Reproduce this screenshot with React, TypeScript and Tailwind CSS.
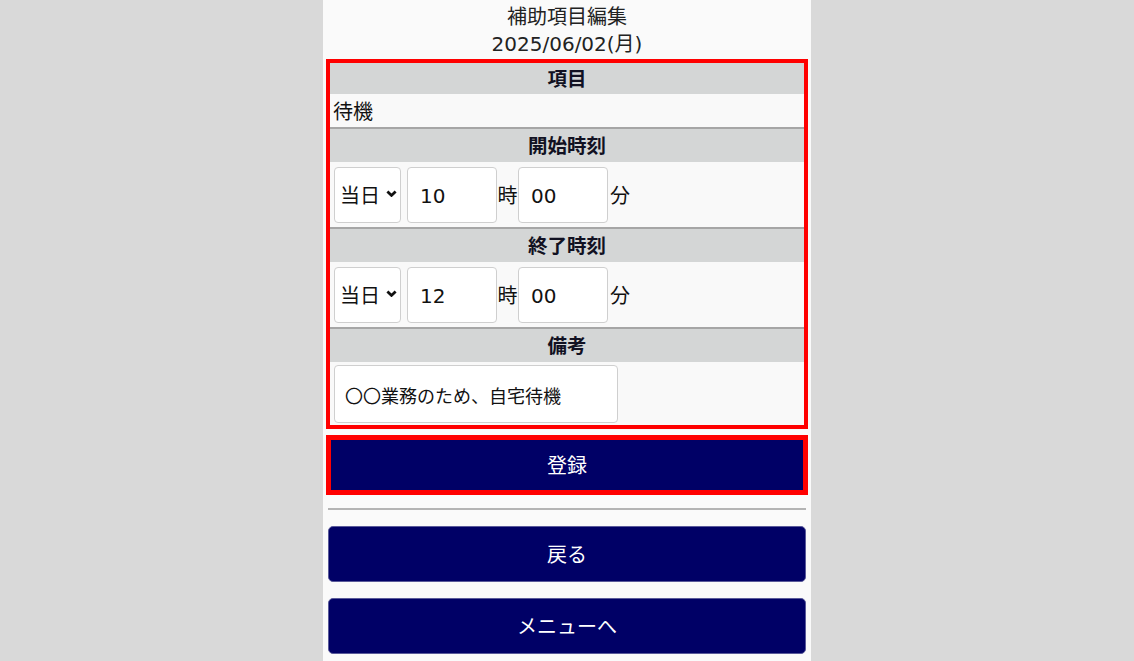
const font = "font-['DejaVu_Sans','Noto_Sans_CJK_JP',sans-serif]";

function SectionHeader({ label, first = false }: { label: string; first?: boolean }) {
  return (
    <div
      className={
        first
          ? "flex h-[31px] items-center justify-center bg-[#d4d6d6] pt-[3px] text-[19.5px] font-bold leading-none text-[#111122]"
          : "flex h-[35px] items-center justify-center border-t-2 border-[#a6a6a6] bg-[#d4d6d6] pt-[3px] text-[19.5px] font-bold leading-none text-[#111122]"
      }
    >
      {label}
    </div>
  );
}

function DaySelect() {
  return (
    <div className="relative h-[56px] w-[67px] shrink-0">
      <select
        defaultValue="当日"
        className="h-full w-full appearance-none rounded-[4px] border border-[#cfcfcf] bg-white pl-[5px] pt-[3px] text-[20px] text-[#111] outline-none"
      >
        <option>当日</option>
        <option>翌日</option>
      </select>
      <svg
        viewBox="0 0 11 7"
        className="pointer-events-none absolute right-[4px] top-[23px] h-[7px] w-[11px]"
      >
        <polyline points="1.4,1.4 5.5,5.4 9.6,1.4" fill="none" stroke="#111" strokeWidth="2.8" />
      </svg>
    </div>
  );
}

function TimeRow({ hour, minute }: { hour: string; minute: string }) {
  return (
    <div className="flex h-[65px] items-center bg-[#f9f9f9] pl-[4px] text-[20px] text-[#111]">
      <DaySelect />
      <input
        defaultValue={hour}
        className="ml-[6px] h-[56px] w-[90px] rounded-[4px] border border-[#cfcfcf] bg-white pl-[12px] pt-[3px] text-[20px] text-[#111] outline-none"
      />
      <span className="w-[21px] pt-[3px] text-center">時</span>
      <input
        defaultValue={minute}
        className="h-[56px] w-[90px] rounded-[4px] border border-[#cfcfcf] bg-white pl-[12px] pt-[3px] text-[20px] text-[#111] outline-none"
      />
      <span className="ml-[2px] pt-[3px]">分</span>
    </div>
  );
}

export default function App() {
  return (
    <div className={`flex min-h-[661px] justify-center bg-[#d9d9d9] ${font}`}>
      <div className="flex w-[488px] flex-col bg-[#fafafa] px-[3px]">
        <div className="pt-[2px] text-center text-[20px] leading-[28px] text-[#222]">
          <div className="pt-[1px]">補助項目編集</div>
          <div className="-mt-[1px]">2025/06/02(月)</div>
        </div>

        <div className="mt-[1px] border-4 border-[#ff0000]">
          <SectionHeader label="項目" first />
          <div className="flex h-[33px] items-center bg-[#f9f9f9] pl-[3px] pt-[3px] text-[20px] text-[#111]">待機</div>

          <SectionHeader label="開始時刻" />
          <TimeRow hour="10" minute="00" />

          <SectionHeader label="終了時刻" />
          <TimeRow hour="12" minute="00" />

          <SectionHeader label="備考" />
          <div className="flex h-[63px] items-start bg-[#f9f9f9] pl-[4px] pt-[3px]">
            <input
              defaultValue="〇〇業務のため、自宅待機"
              className="h-[58px] w-[284px] rounded-[4px] border border-[#cfcfcf] bg-white pl-[10px] pt-[2px] text-[18px] text-[#111] outline-none"
            />
          </div>
        </div>

        <div className="mt-[6px] border-[5px] border-[#ff0000]">
          <button className="flex h-[50px] w-full items-center justify-center bg-[#000066] pt-[2px] text-[20px] text-white">
            登録
          </button>
        </div>

        <div className="mx-[2px] mt-[13px] border-t-2 border-[#b4b4b4]" />

        <div className="flex flex-col gap-[16px] px-[2px] pt-[16px]">
          <button className="flex h-[56px] w-full items-center justify-center rounded-[5px] border border-[#5a5a9a] bg-[#000066] pt-[2px] text-[20px] text-white">
            戻る
          </button>
          <button className="flex h-[56px] w-full items-center justify-center rounded-[5px] border border-[#5a5a9a] bg-[#000066] pt-[2px] text-[20px] text-white">
            メニューへ
          </button>
        </div>
      </div>
    </div>
  );
}
